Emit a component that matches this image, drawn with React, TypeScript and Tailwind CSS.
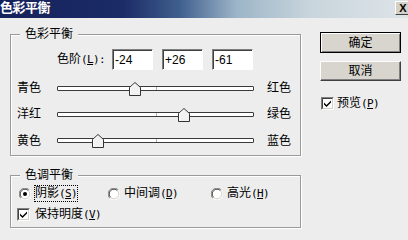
import React from "react";

const sliders = [
  { left: "青色", right: "红色", thumb: 71 },
  { left: "洋红", right: "绿色", thumb: 120 },
  { left: "黄色", right: "蓝色", thumb: 34 },
];

function Half({ children }: { children: React.ReactNode }) {
  return <span className="font-['DejaVu_Sans_Mono',monospace] text-[11px] tracking-[-0.6px]">{children}</span>;
}

function Mn({ pre, key1 }: { pre?: string; key1: string }) {
  return (
    <Half>
      ({<span className="underline underline-offset-[1px]">{key1}</span>}){pre ?? ""}
    </Half>
  );
}

function Thumb() {
  return (
    <svg width="12" height="14" viewBox="0 0 12 14">
      <polygon points="0.5,13.5 0.5,5.5 6,0.5 11.5,5.5 11.5,13.5" fill="#f2f2f2" stroke="#333" strokeWidth="1" />
      <polyline points="1.5,12.5 1.5,6 6,2" fill="none" stroke="#fff" strokeWidth="1" />
    </svg>
  );
}

function Radio({ on }: { on?: boolean }) {
  return (
    <svg width="12" height="12" viewBox="0 0 12 12" className="shrink-0">
      <circle cx="6" cy="6" r="5.5" fill="#fff" />
      <path d="M1.8,10.2 A5.5,5.5 0 0 1 10.2,1.8" fill="none" stroke="#808080" strokeWidth="1" />
      <path d="M2.6,9.4 A4.5,4.5 0 0 1 9.4,2.6" fill="none" stroke="#404040" strokeWidth="1" />
      <path d="M10.2,1.8 A5.5,5.5 0 0 1 1.8,10.2" fill="none" stroke="#ffffff" strokeWidth="1" />
      <path d="M9.4,2.6 A4.5,4.5 0 0 1 2.6,9.4" fill="none" stroke="#d4d0c8" strokeWidth="1" />
      {on && <circle cx="6" cy="6" r="2" fill="#000" />}
    </svg>
  );
}

function Check() {
  return (
    <div className="w-[13px] h-[13px] shrink-0 border border-t-[#808080] border-l-[#808080] border-r-white border-b-white">
      <div className="w-full h-full bg-white border border-t-[#404040] border-l-[#404040] border-r-[#d4d0c8] border-b-[#d4d0c8] flex items-center justify-center">
        <svg width="7" height="7" viewBox="0 0 7 7">
          <path d="M0,2.5 L2.5,5 L7,0.5 L7,2.5 L2.5,7 L0,4.5 Z" fill="#000" />
        </svg>
      </div>
    </div>
  );
}

function Input({ v }: { v: string }) {
  return (
    <div className="w-[41px] h-[21px] bg-white border border-t-[#808080] border-l-[#808080] border-r-white border-b-white shadow-[inset_1px_1px_0_#404040] flex items-center pl-[2px] text-[12px] font-['Liberation_Sans',sans-serif]">
      {v}
    </div>
  );
}

function Group({ title, className, children }: { title: string; className: string; children: React.ReactNode }) {
  return (
    <div className={`relative border border-[#9a9a9a] shadow-[inset_1px_1px_0_#fff,1px_1px_0_#fff] ${className}`}>
      <span className="absolute left-[9px] top-[-8px] px-[5px] bg-[#ededed] leading-[14px]">{title}</span>
      {children}
    </div>
  );
}

export default function App() {
  return (
    <div className="w-[408px] h-[240px] overflow-hidden bg-[#ededed] text-[12px] leading-[14px] text-black font-['Liberation_Sans','Noto_Sans_CJK_SC',sans-serif] flex flex-col">
      <div className="h-[18px] shrink-0 flex items-start bg-[linear-gradient(to_right,#15225c_0%,#1b2b66_30%,#3f5f8e_44%,#9db5c8_58%,#c8d5dc_76%,#dde4e8_100%)]">
        <span className="text-white font-bold text-[13px] leading-[16px] tracking-[-0.5px]">色彩平衡</span>
        <div className="ml-auto mr-[-3px] mt-[1px] w-[16px] h-[14px] bg-[#d4d0c8] border border-t-white border-l-white border-r-[#404040] border-b-[#404040] flex items-center justify-center text-[11px] font-bold leading-none font-['Liberation_Sans',sans-serif]">
          X
        </div>
      </div>
      <div className="flex items-start pl-[10px]">
        <div className="flex flex-col mt-[16px] w-[291px]">
          <Group title="色彩平衡" className="h-[122px] flex flex-col">
            <div className="mt-[14px] h-[21px] flex items-center pl-[46px]">
              <span className="w-[50px] whitespace-nowrap">
                色阶<Mn key1="L" pre=":" />
              </span>
              <div className="ml-[5px] flex gap-[9px]">
                <Input v="-24" />
                <Input v="+26" />
                <Input v="-61" />
              </div>
            </div>
            <div className="mt-[5px] flex flex-col">
              {sliders.map((s, i) => (
                <div key={s.left} className={`${i === 2 ? "h-[27px]" : "h-[26px]"} flex items-center pl-[6px]`}>
                  <span className="w-[40px]">{s.left}</span>
                  <div className="relative w-[197px] h-[5px] border border-[#3a3a3a] bg-white rounded-[1px]">
                    <div className="absolute left-[98px] top-0 w-px h-[3px] bg-[#b0b0b0]" />
                    <div className="absolute top-[-5px]" style={{ left: s.thumb }}>
                      <Thumb />
                    </div>
                  </div>
                  <span className="ml-[13px]">{s.right}</span>
                </div>
              ))}
            </div>
          </Group>
          <Group title="色调平衡" className="mt-[19px] h-[53px] flex flex-col">
            <div className="mt-[7px] h-[21px] flex items-center pl-[8px]">
              <div className="w-[89px] flex items-center">
                <Radio on />
                <span className="ml-[3px] border border-dotted border-black leading-[15px]">
                  阴影<Mn key1="S" />
                </span>
              </div>
              <div className="w-[103px] flex items-center">
                <Radio />
                <span className="ml-[3px] border border-transparent leading-[15px]">
                  中间调<Mn key1="D" />
                </span>
              </div>
              <div className="flex items-center">
                <Radio />
                <span className="ml-[3px] border border-transparent leading-[15px]">
                  高光<Mn key1="H" />
                </span>
              </div>
            </div>
            <div className="h-[21px] flex items-center pl-[6px]">
              <Check />
              <span className="ml-[5px]">
                保持明度<Mn key1="V" />
              </span>
            </div>
          </Group>
        </div>
        <div className="ml-[19px] mt-[14px] flex flex-col">
          <div className="w-[81px] h-[21px] bg-[#d8d5ce] border border-black shadow-[inset_1px_1px_0_#fff,inset_-1px_-1px_0_#808080] flex items-center justify-center">
            确定
          </div>
          <div className="mt-[8px] w-[81px] h-[20px] bg-[#d8d5ce] border border-t-white border-l-white border-r-[#404040] border-b-[#404040] shadow-[inset_-1px_-1px_0_#808080] flex items-center justify-center">
            取消
          </div>
          <div className="mt-[14px] h-[17px] flex items-center pl-[1px]">
            <Check />
            <span className="ml-[3px]">
              预览<Mn key1="P" />
            </span>
          </div>
        </div>
      </div>
    </div>
  );
}
